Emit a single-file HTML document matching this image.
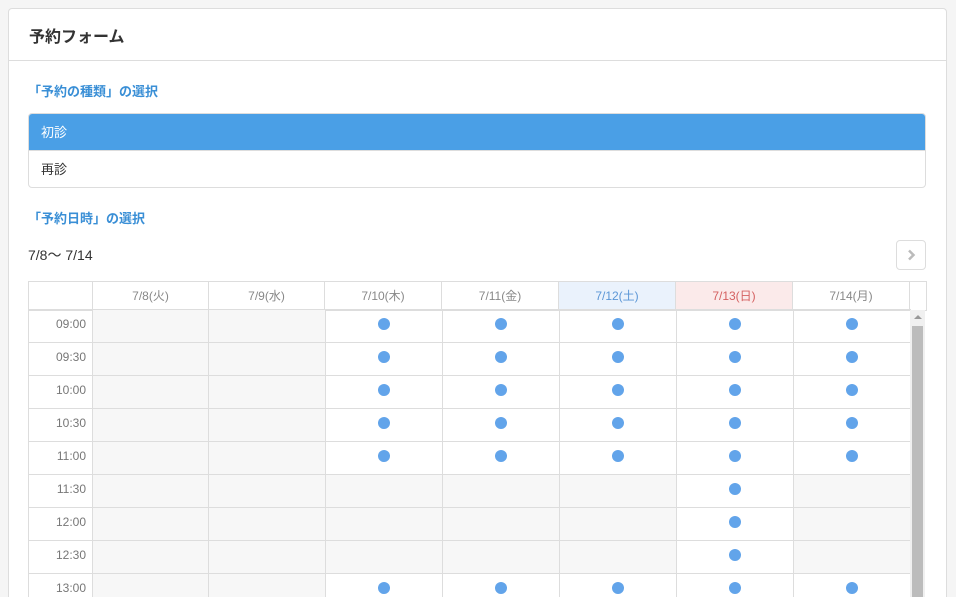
<!DOCTYPE html>
<html><head><meta charset="utf-8">
<style>
*{box-sizing:border-box;margin:0;padding:0}
html,body{width:956px;height:597px;overflow:hidden}
body{background:#f5f5f5;font-family:"Liberation Sans","Noto Sans CJK JP",sans-serif;position:relative}
.card{position:absolute;left:8px;top:8px;width:939px;height:589px;background:#fff;border:1px solid #ddd;border-bottom:none;border-radius:4px 4px 0 0}
.hd{height:52px;border-bottom:1px solid #ddd;padding:14px 0 0 20px;font-size:16px;font-weight:bold;color:#333}
.sec{position:absolute;left:28px;font-size:13px;font-weight:bold;color:#3a8fd6}
.list{position:absolute;left:28px;top:113px;width:898px;height:75px;border:1px solid #ddd;border-radius:4px;overflow:hidden;font-size:13px}
.list div{height:37px;padding:8px 12px}
.list .a{background:#4a9fe6;color:#fff;border-bottom:1px solid #ddd}
.list .b{color:#333}
.range{position:absolute;left:28px;top:245px;font-size:14px;color:#333}
.nb{position:absolute;left:896px;top:240px;width:30px;height:30px;border:1px solid #ddd;border-radius:4px}
table{border-collapse:collapse;position:absolute;table-layout:fixed;font-size:12px}
td{border:1px solid #ddd;text-align:center;color:#888}
.th{left:28px;top:281px;width:898px}
.th td{height:29px;padding-bottom:2px}
.tb{left:28px;top:309px;width:882px}
.tb td{height:33px;padding-bottom:5px}
.tb td.t{text-align:right;padding-right:6px;color:#777}
.g{background:#f7f7f7}
.d{display:inline-block;width:12px;height:12px;border-radius:50%;background:#62a4ea;vertical-align:middle}
.sat{background:#eaf2fc;color:#5b96d6 !important}
.sun{background:#fbeaea;color:#d46060 !important}
.sb{position:absolute;left:910px;top:310px;width:15px;height:287px;background:#f0f0f0}
.sb .th2{position:absolute;left:2px;top:16px;width:11px;height:271px;background:#bcbcbc}
.sb .ar{position:absolute;left:4px;top:5px;width:0;height:0;border-left:4px solid transparent;border-right:4px solid transparent;border-bottom:4px solid #999}
.clip{position:absolute;left:0;top:0;width:956px;height:597px;overflow:hidden}
</style></head><body><div class="clip">
<div class="card"><div class="hd">予約フォーム</div></div>
<div class="sec" style="top:81px">「予約の種類」の選択</div>
<div class="list"><div class="a">初診</div><div class="b">再診</div></div>
<div class="sec" style="top:208px">「予約日時」の選択</div>
<div class="range">7/8～ 7/14</div>
<div class="nb"><svg width="28" height="28" viewBox="0 0 28 28"><path d="M12 9.5l4.5 4.5-4.5 4.5" fill="none" stroke="#bbb" stroke-width="2.5"/></svg></div>
<table class="th"><colgroup><col style="width:64px"><col style="width:116px"><col style="width:116px"><col style="width:117px"><col style="width:117px"><col style="width:117px"><col style="width:117px"><col style="width:117px"><col style="width:17px"></colgroup>
<tr><td></td><td>7/8(火)</td><td>7/9(水)</td><td>7/10(木)</td><td>7/11(金)</td><td class="sat">7/12(土)</td><td class="sun">7/13(日)</td><td>7/14(月)</td><td></td></tr></table>
<div style="position:absolute;left:0;top:0;width:956px;height:597px;overflow:hidden">
<table class="tb"><colgroup><col style="width:64px"><col style="width:116px"><col style="width:117px"><col style="width:117px"><col style="width:117px"><col style="width:117px"><col style="width:117px"><col style="width:117px"></colgroup>
<tr><td class="t">09:00</td><td class="g"></td><td class="g"></td><td><i class="d"></i></td><td><i class="d"></i></td><td><i class="d"></i></td><td><i class="d"></i></td><td><i class="d"></i></td></tr>
<tr><td class="t">09:30</td><td class="g"></td><td class="g"></td><td><i class="d"></i></td><td><i class="d"></i></td><td><i class="d"></i></td><td><i class="d"></i></td><td><i class="d"></i></td></tr>
<tr><td class="t">10:00</td><td class="g"></td><td class="g"></td><td><i class="d"></i></td><td><i class="d"></i></td><td><i class="d"></i></td><td><i class="d"></i></td><td><i class="d"></i></td></tr>
<tr><td class="t">10:30</td><td class="g"></td><td class="g"></td><td><i class="d"></i></td><td><i class="d"></i></td><td><i class="d"></i></td><td><i class="d"></i></td><td><i class="d"></i></td></tr>
<tr><td class="t">11:00</td><td class="g"></td><td class="g"></td><td><i class="d"></i></td><td><i class="d"></i></td><td><i class="d"></i></td><td><i class="d"></i></td><td><i class="d"></i></td></tr>
<tr><td class="t">11:30</td><td class="g"></td><td class="g"></td><td class="g"></td><td class="g"></td><td class="g"></td><td><i class="d"></i></td><td class="g"></td></tr>
<tr><td class="t">12:00</td><td class="g"></td><td class="g"></td><td class="g"></td><td class="g"></td><td class="g"></td><td><i class="d"></i></td><td class="g"></td></tr>
<tr><td class="t">12:30</td><td class="g"></td><td class="g"></td><td class="g"></td><td class="g"></td><td class="g"></td><td><i class="d"></i></td><td class="g"></td></tr>
<tr><td class="t">13:00</td><td class="g"></td><td class="g"></td><td><i class="d"></i></td><td><i class="d"></i></td><td><i class="d"></i></td><td><i class="d"></i></td><td><i class="d"></i></td></tr>
</table></div>
<div class="sb"><div class="ar"></div><div class="th2"></div></div>
</div></body></html>
